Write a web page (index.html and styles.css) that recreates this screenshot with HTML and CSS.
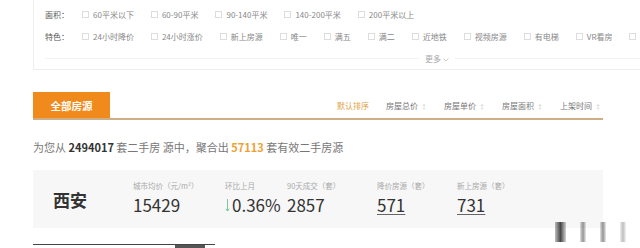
FILE: index.html
```html
<!DOCTYPE html>
<html lang="zh-CN">
<head>
  <meta charset="UTF-8" />
  <title>二手房</title>
  <link rel="stylesheet" href="styles.css">
</head>
<body>
  <div class="page">
    <!-- 筛选条件 -->
    <div class="filter">
      <div class="filter-row">
        <span class="filter-label">面积：</span>
        <label class="opt"><i class="box"></i>60平米以下</label>
        <label class="opt"><i class="box"></i>60-90平米</label>
        <label class="opt"><i class="box"></i>90-140平米</label>
        <label class="opt"><i class="box"></i>140-200平米</label>
        <label class="opt"><i class="box"></i>200平米以上</label>
      </div>
      <div class="filter-row">
        <span class="filter-label">特色：</span>
        <label class="opt"><i class="box"></i>24小时降价</label>
        <label class="opt"><i class="box"></i>24小时涨价</label>
        <label class="opt"><i class="box"></i>新上房源</label>
        <label class="opt"><i class="box"></i>唯一</label>
        <label class="opt"><i class="box"></i>满五</label>
        <label class="opt"><i class="box"></i>满二</label>
        <label class="opt"><i class="box"></i>近地铁</label>
        <label class="opt"><i class="box"></i>视频房源</label>
        <label class="opt"><i class="box"></i>有电梯</label>
        <label class="opt"><i class="box"></i>VR看房</label>
        <label class="opt"><i class="box"></i></label>
      </div>
      <div class="more">
        <span>更多 <svg width="6" height="4" viewBox="0 0 6 4"><path d="M0.5 0.5 L3 3 L5.5 0.5" fill="none" stroke="#bbb" stroke-width="0.8"/></svg></span>
      </div>
    </div>

    <!-- 排序 -->
    <div class="tabs">
      <div class="tab-active">全部房源</div>
      <ul class="sort">
        <li class="on">默认排序</li>
        <li>房屋总价<i>↕</i></li>
        <li>房屋单价<i>↕</i></li>
        <li>房屋面积<i>↕</i></li>
        <li>上架时间<i>↕</i></li>
      </ul>
    </div>

    <p class="summary">为您从 <b>2494017</b> 套二手房 源中，聚合出 <b class="hl">57113</b> 套有效二手房源</p>

    <!-- 城市行情 -->
    <div class="stats">
      <div class="city">西安</div>
      <div class="stat-grid">
        <div class="stat">
          <div class="stat-label">城市均价（元/m²）</div>
          <div class="stat-value">15429</div>
        </div>
        <div class="stat">
          <div class="stat-label">环比上月</div>
          <div class="stat-value"><svg class="down" width="5" height="13" viewBox="0 0 5 13"><path d="M2.5 0 V12 M0.7 9.8 L2.5 12 L4.3 9.8" fill="none" stroke="#5cb88a" stroke-width="0.8"/></svg>0.36%</div>
        </div>
        <div class="stat">
          <div class="stat-label">90天成交（套）</div>
          <div class="stat-value">2857</div>
        </div>
        <div class="stat">
          <div class="stat-label">降价房源（套）</div>
          <div class="stat-value link">571</div>
        </div>
        <div class="stat">
          <div class="stat-label">新上房源（套）</div>
          <div class="stat-value link">731</div>
        </div>
      </div>
    </div>

    <div class="next"><span></span></div>
  </div>

  <!-- 水印 -->
  <div class="mark">
    <i class="bar1"></i><i class="bar2"></i><i class="bar3"></i><i class="bar4"></i>
  </div>
</body>
</html>
```

FILE: styles.css
```css
body {
  margin: 0;
  width: 640px;
  height: 248px;
  overflow: hidden;
  position: relative;
  background-color: #fff;
  font-family: "Noto Sans CJK SC", "Noto Sans", sans-serif;
  color: #666;
}

.page {
  padding-left: 33px;
}

.filter {
  width: 808px;
  height: 70px;
  box-sizing: border-box;
  border-left: 1px solid #eee;
  border-bottom: 1px solid #eee;
  padding: 3px 12px 0 11px;
}

.filter-row {
  display: flex;
  align-items: center;
  height: 22px;
  font-size: 8px;
  color: #888;
  white-space: nowrap;
}

.filter-label {
  width: 37px;
  flex-shrink: 0;
  color: #555;
}

.opt {
  display: flex;
  align-items: center;
  margin-right: 17px;
}

.box {
  width: 7px;
  height: 7px;
  box-sizing: border-box;
  border: 1px solid #ddd;
  margin-right: 4px;
}

.more {
  display: flex;
  align-items: center;
  height: 22px;
  font-size: 8px;
  color: #aaa;
}

.more::before,
.more::after {
  content: "";
  flex: 1;
  border-top: 1px solid #f2f2f2;
}

.more span {
  padding: 0 6px;
}

.tabs {
  display: flex;
  align-items: center;
  width: 570px;
  height: 26px;
  margin-top: 22px;
  border-bottom: 2px solid #cfae84;
}

.tab-active {
  width: 77px;
  height: 100%;
  display: flex;
  align-items: center;
  justify-content: center;
  background-color: #f18a1c;
  color: #fff;
  font-size: 10.5px;
  font-weight: bold;
}

.sort {
  display: flex;
  gap: 17px;
  list-style: none;
  margin: 0 0 0 auto;
  padding: 0 2px 0 0;
  font-size: 8px;
  color: #777;
}

.sort .on {
  color: #e3a13f;
}

.sort i {
  font-style: normal;
  font-size: 6px;
  color: #ccc;
  margin-left: 3px;
}

.summary {
  margin: 19px 0 0;
  line-height: 16px;
  font-size: 11px;
  color: #777;
}

.summary b {
  color: #333;
}

.summary .hl {
  color: #f0a030;
}

.stats {
  display: flex;
  width: 570px;
  height: 58px;
  margin-top: 15px;
  box-sizing: border-box;
  padding-left: 20px;
  background-color: #f7f7f7;
}

.city {
  width: 80px;
  align-self: center;
  font-size: 17px;
  font-weight: bold;
  color: #333;
}

.stat-grid {
  display: grid;
  grid-template-columns: 92px 62px 90px 80px auto;
  padding-top: 11px;
}

.stat-label {
  font-size: 7.5px;
  line-height: 10px;
  color: #aaa;
  white-space: nowrap;
}

.stat-value {
  margin-top: 3px;
  font-size: 17px;
  line-height: 22px;
  color: #333;
  display: flex;
  align-items: center;
}

.stat-value .down {
  margin-right: 2px;
}

.stat-value.link {
  text-decoration: underline;
  text-decoration-color: #666;
  text-underline-offset: 2px;
}

.next {
  width: 182px;
  height: 4px;
  margin-top: 16px;
  border-top: 1px solid #444;
  display: flex;
  justify-content: flex-end;
}

.next span {
  width: 30px;
  height: 4px;
  margin-right: 10px;
  background-color: #555;
}

.mark {
  position: absolute;
  left: 553px;
  top: 222px;
  width: 87px;
  height: 22px;
}

.mark i {
  position: absolute;
  top: 0;
  height: 20px;
  background: linear-gradient(to right, rgba(60,60,60,0.15), rgba(60,60,60,0.55), rgba(60,60,60,0.1));
}

.mark .bar1 { left: 2px; width: 11px; background: linear-gradient(to right, rgba(40,40,40,0.3), rgba(40,40,40,0.85), rgba(40,40,40,0.2)); }
.mark .bar2 { left: 27px; width: 6px; }
.mark .bar3 { left: 47px; width: 6px; }
.mark .bar4 { left: 67px; width: 6px; opacity: 0.6; }
```
